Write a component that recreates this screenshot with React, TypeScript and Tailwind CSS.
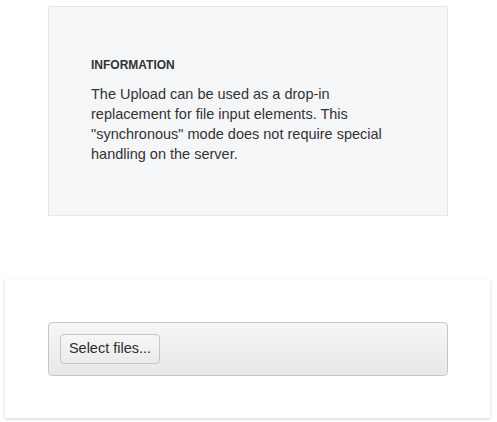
import React from "react";

export default function App() {
  return (
    <div className="w-[497px] h-[422px] bg-white overflow-hidden" style={{ fontFamily: '"Liberation Sans", Arial, sans-serif' }}>
      <div className="pt-[6px] pl-[48px]">
        <div className="w-[400px] h-[210px] bg-[#f5f6f8] border border-[#e6e7e9] pt-[50px] pl-[42px] text-[#333333]">
          <h4 className="text-[12px] leading-[16px] font-bold">INFORMATION</h4>
          <p className="mt-[11px] w-[296px] text-[14.5px] leading-[20px]">
            The Upload can be used as a drop-in replacement for file input elements. This "synchronous" mode does not require special handling on the server.
          </p>
        </div>
      </div>
      <div className="mt-[63px] ml-[5px] w-[485px] h-[139px] bg-white shadow-[0_1px_3px_rgba(0,0,0,0.18)] pt-[43px] pl-[43px]">
        <div className="w-[400px] h-[54px] rounded-[4px] border border-[#c5c5c5] bg-gradient-to-b from-[#f6f6f6] to-[#e8e8e8] pt-[11px] pl-[11px]">
          <button className="w-[100px] h-[30px] rounded-[4px] border border-[#c5c5c5] bg-gradient-to-b from-[#f6f6f6] to-[#ebebeb] text-[14.5px] text-[#2e2e2e] flex items-center justify-center">
            Select files...
          </button>
        </div>
      </div>
    </div>
  );
}
